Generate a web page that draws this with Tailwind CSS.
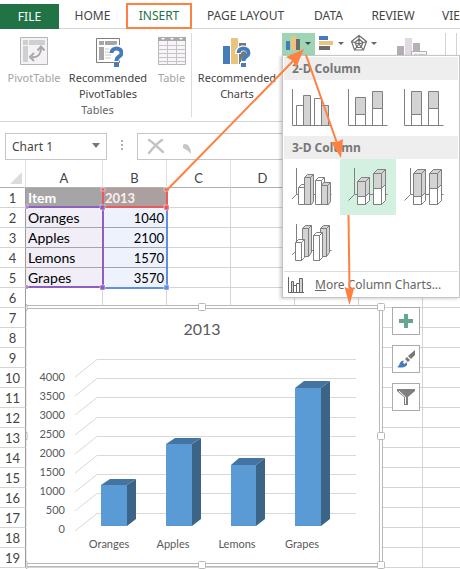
<!DOCTYPE html>
<html lang="en">
<head>
<meta charset="utf-8">
<meta name="viewport" content="width=device-width, initial-scale=1">
<title>Chart 1 - Spreadsheet</title>
<script src="https://cdn.jsdelivr.net/npm/@tailwindcss/browser@4"></script>
</head>
<body class="bg-white">
<div class="relative min-h-screen w-full overflow-hidden font-['Noto_Sans',sans-serif] text-xs text-[#444]">

  <nav class="flex h-[29px] items-end whitespace-nowrap pt-1" aria-label="Ribbon tabs">
    <a href="#" class="flex h-[25px] w-[59px] shrink-0 items-center justify-center bg-[#217346] text-white">FILE</a>
    <a href="#" class="flex h-[25px] w-[67px] shrink-0 items-center justify-center border-b border-[#d4d4d4]">HOME</a>
    <a href="#" class="flex h-[26px] w-[66px] shrink-0 items-center justify-center border-2 border-[#ff8141] text-[#217346]">INSERT</a>
    <a href="#" class="flex h-[25px] w-[107px] shrink-0 items-center justify-center border-b border-[#d4d4d4]">PAGE LAYOUT</a>
    <a href="#" class="flex h-[25px] w-[59px] shrink-0 items-center justify-center border-b border-[#d4d4d4]">DATA</a>
    <a href="#" class="flex h-[25px] w-[70px] shrink-0 items-center justify-center border-b border-[#d4d4d4]">REVIEW</a>
    <a href="#" class="flex h-[25px] min-w-[60px] flex-1 items-center border-b border-[#d4d4d4] pl-[14px]">VIEW</a>
  </nav>

  <section class="flex h-[93px] border-b border-[#d4d4d4] pt-1" aria-label="Insert">
    <div class="flex h-[84px] w-[192px] shrink-0 flex-col justify-between border-r border-[#dcdcdc]">
      <div class="flex text-[11px]">
        <button class="flex w-[68px] flex-col items-center text-[#a3a3a3]">
          <svg class="mt-1 h-[28px] w-[28px]" viewBox="0 0 28 28"><path d="M.5.5h27v27H.5z" fill="#f5f2f7" stroke="#b5b5b5"/><path d="M3 3h5v5H3zM9 3h16v5H9zM3 9h5v16H3z" fill="#cfcfcf"/><path d="M12 20c6 1 9-3 9-9" fill="none" stroke="#a9a9a9" stroke-width="2"/><path d="M17.500 13.500l3.500-4 3.500 4M14 16l-4 4 4 4" fill="none" stroke="#a9a9a9" stroke-width="2"/></svg>
          <span class="mt-[5px] leading-4">PivotTable</span>
        </button>
        <button class="flex w-[80px] flex-col items-center">
          <svg class="mt-1 h-[30px] w-[30px]" viewBox="0 0 30 30"><path d="M3.500 1.500h23v24h-23z" fill="#fff" stroke="#7d7d7d"/><path d="M6 4h5v4H6zM12 4h12v4H12zM6 10h5v13H6z" fill="#a6a6a6"/><path d="M12 12h8M12 15h6M12 18h6M12 21h6" stroke="#c7c7c7"/><path d="M18.500 15c0-6 10-6 10 0 0 4-5 3-5 9" fill="none" stroke="#fff" stroke-width="6"/><path d="M18.500 16c0-6 10-6 10 0 0 4-5 3-5 8" fill="none" stroke="#447dbb" stroke-width="4"/><path d="M21 26h5v4h-5z" fill="#447dbb"/></svg>
          <span class="mt-[3px] leading-4">Recommended<br>PivotTables</span>
        </button>
        <button class="flex w-[43px] flex-col items-center pl-1 text-[#a3a3a3]">
          <svg class="mt-1 h-[28px] w-[28px]" viewBox="0 0 28 28"><path d="M.5.5h27v27H.5z" fill="#f8f4f9" stroke="#b5b5b5"/><path d="M0 0h28v4H0z" fill="#aaa"/><path d="M3 1h4L5 3zM12 1h4l-2 2zM21 1h4l-2 2z" fill="#fff"/><path d="M0 8.500h28M0 12.500h28M0 16.500h28M0 20.500h28M0 24.500h28M9.500 4v24M18.500 4v24" stroke="#c5c5c5"/></svg>
          <span class="mt-[5px] leading-4">Table</span>
        </button>
      </div>
      <span class="pl-1 text-center text-[11px] leading-[14px] text-[#666]">Tables</span>
    </div>

    <div class="flex flex-1 items-start overflow-hidden">
      <button class="flex w-[90px] shrink-0 flex-col items-center text-[11px]">
        <svg class="mt-1 h-[30px] w-[30px]" viewBox="0 0 30 30"><path d="M1 9h7v18H1z" fill="#447dbb"/><path d="M9 1h7v26H9z" fill="#eac47d"/><path d="M17 6h7v21h-7z" fill="#777"/><path d="M16 17c0-8 12-7 12 0 0 4-6 3-6 8" fill="none" stroke="#fff" stroke-width="6"/><path d="M16.500 16c0-6 10-6 10 0 0 4-5 3-5 8" fill="none" stroke="#447dbb" stroke-width="4"/><path d="M18 25h7v5h-7z" fill="#fff"/><path d="M19 26h5v4h-5z" fill="#447dbb"/></svg>
        <span class="mt-[3px] leading-4">Recommended<br>Charts</span>
      </button>
      <button class="h-[23px] w-[33px] shrink-0 bg-[#9fd5b7]" aria-label="Insert column chart">
        <svg class="h-[23px] w-[33px]" viewBox="0 0 33 23"><path d="M4 8h4v9H4z" fill="#447dbb"/><path d="M9 3h5v14H9z" fill="#eac47d"/><path d="M14 6h4v11h-4z" fill="#6c6c6c"/><path d="M23 9h6l-3 3z" fill="#444"/></svg>
      </button>
      <button class="shrink-0" aria-label="Insert bar chart">
        <svg class="h-[23px] w-[33px]" viewBox="0 0 33 23"><path d="M4 3h9v4H4z" fill="#447dbb"/><path d="M4 8h14v4H4z" fill="#eac47d"/><path d="M4 13h11v4H4z" fill="#6c6c6c"/><path d="M23 9h6l-3 3z" fill="#666"/></svg>
      </button>
      <button class="shrink-0" aria-label="Insert radar chart">
        <svg class="h-[23px] w-[33px]" viewBox="0 0 33 23"><path d="M11 2.500l7.500 6-3 8.500h-9l-3-8.500zM11 6l4 3.500-2 5H9l-2-5zM11 2v9M18.500 8.500L11 11M15.500 17L11 11M6.500 17l4.500-6M3.500 8.500L11 11" fill="none" stroke="#6c6c6c" stroke-width="1.200"/><path d="M23 9h6l-3 3z" fill="#666"/></svg>
      </button>
      <button class="shrink-0" aria-label="PivotChart">
        <svg class="ml-4 h-[32px] w-[32px]" viewBox="0 0 32 32"><path d="M0 13h7v16H0z" fill="#b2aeb2"/><path d="M8 5h7v24H8z" fill="#e0d9e1"/><path d="M16 10h7v18h-7z" fill="#b5b2b5"/><path d="M14.500 18.500h15v13h-15z" fill="#f8f5f9" stroke="#b2b2b2"/><path d="M17 21h3v3h-3zM21 21h7v3h-7z" fill="#ccc"/></svg>
      </button>
      <div class="ml-4 h-[84px] w-[12px] shrink-0 border-x border-[#d4d4d4]"></div>
    </div>
  </section>

  <section class="flex h-[38px] items-end gap-[14px] pl-[5px]" aria-label="Formula bar">
    <div class="relative h-[27px] w-[102px] shrink-0 border border-[#c6c6c6]">
      <input aria-label="Name box" value="Chart 1" class="h-full w-[80px] bg-transparent pl-[6px] text-[#444] outline-none">
      <svg class="absolute right-[6px] top-[9px] h-[5px] w-[8px]" viewBox="0 0 8 5"><path d="M0 0h8L4 5z" fill="#777"/></svg>
    </div>
    <svg class="mb-2 h-[12px] w-[2px] shrink-0" viewBox="0 0 2 12"><path d="M0 0h2v2H0zM0 4h2v2H0zM0 8h2v2H0z" fill="#b0b0b0"/></svg>
    <div class="flex h-[27px] flex-1 items-center gap-[18px] border border-r-0 border-[#c6c6c6] pl-[9px]">
      <svg class="h-[17px] w-[18px]" viewBox="0 0 18 17"><path d="M2 2c5 3 9 8 14 12M15 2C10 5 6 10 2 15" fill="none" stroke="#c3c3c3" stroke-width="2.500" stroke-linecap="round"/></svg>
      <svg class="mt-1 h-[11px] w-[8px]" viewBox="0 0 8 11"><path d="M0 2c3-3 8 1 8 9C6 8 2 6 0 5z" fill="#c6c6c6"/></svg>
    </div>
  </section>

  <main class="relative">
    <table class="w-full min-w-[486px] table-fixed border-separate border-spacing-0 font-[Lato,sans-serif] text-[13px] leading-4 [&_td]:h-5 [&_td]:border-b [&_td]:border-r [&_td]:border-[#d4d4d4] [&_td]:p-0 [&_td]:px-[2px] [&_tbody_th]:h-5 [&_tbody_th]:border-b [&_tbody_th]:border-r [&_tbody_th]:border-b-[#d4d4d4] [&_tbody_th]:border-r-[#9c9c9c] [&_tbody_th]:p-0 [&_tbody_th]:font-normal [&_thead_th]:h-[28px] [&_thead_th]:border-b [&_thead_th]:border-r [&_thead_th]:border-b-[#b0b0b0] [&_thead_th]:border-r-[#e2e2e2] [&_thead_th]:p-0 [&_thead_th]:pt-2 [&_thead_th]:font-normal">
      <colgroup><col class="w-[26px]"><col class="w-[77px]"><col class="w-[64px]"><col class="w-[64px]"><col class="w-[64px]"><col class="w-[64px]"><col class="w-[64px]"><col></colgroup>
      <thead><tr><th><svg class="ml-[10px] h-[12px] w-[12px]" viewBox="0 0 12 12"><path d="M12 0v12H0z" fill="#dcdcdc"/></svg></th><th>A</th><th>B</th><th>C</th><th>D</th><th>E</th><th>F</th><th>G</th></tr></thead>
      <tbody>
        <tr><th>1</th><td class="bg-[#a5a5a5] text-sm leading-4 font-bold text-white">Item</td><td class="bg-[#ac9f9f] font-bold text-[#fbeeee]">2013</td><td></td><td></td><td></td><td></td><td></td></tr>
        <tr class="text-black"><th class="text-[#444]">2</th><td class="border-b-[#a5a5a5]! bg-[#f2eef8] text-sm leading-4">Oranges</td><td class="border-b-[#a5a5a5]! bg-[#edf2fc] text-right">1040</td><td></td><td></td><td></td><td></td><td></td></tr>
        <tr class="text-black"><th class="text-[#444]">3</th><td class="border-b-[#a5a5a5]! bg-[#f2eef8] text-sm leading-4">Apples</td><td class="border-b-[#a5a5a5]! bg-[#edf2fc] text-right">2100</td><td></td><td></td><td></td><td></td><td></td></tr>
        <tr class="text-black"><th class="text-[#444]">4</th><td class="border-b-[#a5a5a5]! bg-[#f2eef8] text-sm leading-4">Lemons</td><td class="border-b-[#a5a5a5]! bg-[#edf2fc] text-right">1570</td><td></td><td></td><td></td><td></td><td></td></tr>
        <tr class="text-black"><th class="text-[#444]">5</th><td class="bg-[#f2eef8] text-sm leading-4">Grapes</td><td class="bg-[#edf2fc] text-right">3570</td><td></td><td></td><td></td><td></td><td></td></tr>
        <tr><th>6</th><td></td><td></td><td></td><td></td><td></td><td></td><td></td></tr>
        <tr><th>7</th><td></td><td></td><td></td><td></td><td></td><td></td><td></td></tr>
        <tr><th>8</th><td></td><td></td><td></td><td></td><td></td><td></td><td></td></tr>
        <tr><th>9</th><td></td><td></td><td></td><td></td><td></td><td></td><td></td></tr>
        <tr><th>10</th><td></td><td></td><td></td><td></td><td></td><td></td><td></td></tr>
        <tr><th>11</th><td></td><td></td><td></td><td></td><td></td><td></td><td></td></tr>
        <tr><th>12</th><td></td><td></td><td></td><td></td><td></td><td></td><td></td></tr>
        <tr><th>13</th><td></td><td></td><td></td><td></td><td></td><td></td><td></td></tr>
        <tr><th>14</th><td></td><td></td><td></td><td></td><td></td><td></td><td></td></tr>
        <tr><th>15</th><td></td><td></td><td></td><td></td><td></td><td></td><td></td></tr>
        <tr><th>16</th><td></td><td></td><td></td><td></td><td></td><td></td><td></td></tr>
        <tr><th>17</th><td></td><td></td><td></td><td></td><td></td><td></td><td></td></tr>
        <tr><th>18</th><td></td><td></td><td></td><td></td><td></td><td></td><td></td></tr>
        <tr><th>19</th><td></td><td></td><td></td><td></td><td></td><td></td><td></td></tr>
      </tbody>
    </table>

    <!-- Source range outlines: category names, series name, values -->
    <svg class="absolute left-[24px] top-[26px] h-[106px] w-[150px]" viewBox="24 186 150 106" aria-hidden="true" fill="none">
      <path d="M103 288h64V208" stroke="#5f8fe6" stroke-width="2"/>
      <path d="M103 189v18h64v-18" stroke="#ea5a5a" stroke-width="2"/>
      <path d="M27 207h76v80H27" stroke="#8c5fc0" stroke-width="2"/>
      <path d="M26 205h2v4h-2zM26 285h2v4h-2zM100 205h5v5h-5zM100 285h5v5h-5z" fill="#8c5fc0" stroke="#fff" stroke-width=".5"/>
      <path d="M101 188h4v3h-4zM164 188h5v3h-5zM164 205h5v5h-5z" fill="#ea5a5a" stroke="#fff" stroke-width=".5"/>
      <path d="M164 285h5v5h-5z" fill="#5f8fe6" stroke="#fff" stroke-width=".5"/>
    </svg>

    <svg class="absolute left-[26px] top-[143px] h-[266px] w-[360px] font-[Lato,sans-serif]" viewBox="26 303 360 266" role="img" aria-label="2013 sales by item, 3-D column chart">
      <path d="M26 305h357v262H26z" fill="#fff"/>
      <path d="M26 305.500h356.500v261H26M26 308.500h353.500v255H26" fill="none" stroke="#b8b8b8"/>
      <path d="M26.500 308v256" stroke="#ececec"/>
      <g fill="#fff" stroke="#b8b8b8"><rect x="198.500" y="303.500" width="7" height="7" rx="1"/><rect x="377.500" y="303.500" width="7" height="7" rx="1"/><rect x="377.500" y="432.500" width="7" height="7" rx="1"/><rect x="377.500" y="561.500" width="7" height="7" rx="1"/><rect x="198.500" y="561.500" width="7" height="7" rx="1"/><path d="M26 304.500h1v6h-1M26 432.500h1v7h-1M26 561.500h1v7h-1"/></g>
      <path d="M75 377l22-17.500h259M75 396l22-17.500h259M75 415l22-17.500h259M75 435l22-17.500h259M75 454l22-17.500h259M75 473l22-17.500h259M75 492l22-17.500h259M75 511l22-17.500h259M75 531l22-17.500h259" fill="none" stroke="#d9d9d9"/>
      <g fill="#3b6487"><path d="M127 485l9-6v40l-9 7zM192 444l9-6v81l-9 7zM256 465l9-7v61l-9 7zM321 388l9-7v138l-9 7z"/></g>
      <g fill="#4475a2"><path d="M101 485l9-6h26l-9 6zM166 444l9-6h26l-9 6zM231 465l8-7h26l-9 7zM295 388l9-7h26l-9 7z"/></g>
      <g fill="#5b9bd5"><path d="M101 485h26v41h-26zM166 444h26v82h-26zM231 465h25v61h-25zM295 388h26v138h-26z"/></g>
      <text x="202" y="335" text-anchor="middle" font-size="16" fill="#595959">2013</text>
      <g font-size="11" fill="#595959" text-anchor="end"><text x="65" y="381">4000</text><text x="65" y="400">3500</text><text x="65" y="419">3000</text><text x="65" y="438">2500</text><text x="65" y="457">2000</text><text x="65" y="476">1500</text><text x="65" y="495">1000</text><text x="65" y="514">500</text><text x="65" y="533">0</text></g>
      <g font-size="11" fill="#595959" text-anchor="middle"><text x="109" y="548">Oranges</text><text x="173" y="548">Apples</text><text x="237" y="548">Lemons</text><text x="302" y="548">Grapes</text></g>
    </svg>

    <div class="absolute left-[392px] top-[147px] flex flex-col gap-[10px]">
      <button aria-label="Chart elements" class="flex h-[28px] w-[28px] items-center justify-center border border-[#ababab] bg-white"><svg class="h-[14px] w-[14px]" viewBox="0 0 14 14"><path d="M5 0h4v5h5v4H9v5H5V9H0V5h5z" fill="#66a68e"/></svg></button>
      <button aria-label="Chart styles" class="flex h-[28px] w-[28px] items-center justify-center border border-[#ababab] bg-white"><svg class="h-[18px] w-[18px]" viewBox="0 0 18 18"><path d="M18 0v5l-4 4-3-3zM10 7l3 3-2 2-3-3z" fill="#777"/><path d="M0 17c3-1 2-5 5-6 2-1 6 1 5 4-2 3-7 3-10 2z" fill="#447dbb"/><path d="M6 12c1-2 4-1 3 1l-2 1z" fill="#fff"/></svg></button>
      <button aria-label="Chart filters" class="flex h-[28px] w-[28px] items-center justify-center border border-[#ababab] bg-white"><svg class="h-[18px] w-[18px]" viewBox="0 0 18 18"><path d="M0 1h18v2l-7 6v8H7V9L0 3z" fill="#808080"/><path d="M2 3l6.500 6v7" fill="none" stroke="#fff"/></svg></button>
    </div>
  </main>

  <div role="menu" class="absolute left-[282px] top-[55px] w-[178px] border border-[#c6c6c6] bg-white p-px pb-0 shadow-[-2px_1px_3px_rgba(0,0,0,0.18)]">
    <h3 class="h-[23px] bg-[#eee] pl-2 font-bold leading-[23px] text-[#777]">2-D Column</h3>
    <div class="flex flex-wrap [&_path]:stroke-[#7f7f7f]">
      <button role="menuitem" aria-label="Clustered column"><svg class="h-[56px] w-[56px]" viewBox="0 0 56 56" fill="#fff"><path d="M12.500 45V25.500h7V45M30.500 45V18.500h7V45"/><path d="M19.500 45V15.500h7V45M37.500 45V25.500h7V45" fill="#d3d3d3"/><path d="M8.500 9v36.500h39" fill="none"/></svg></button>
      <button role="menuitem" aria-label="Stacked column"><svg class="h-[56px] w-[56px]" viewBox="0 0 56 56" fill="#fff"><path d="M15.500 34.500h10v11h-10zM32.500 28.500h10v17h-10z"/><path d="M15.500 17.500h10v17h-10zM32.500 11.500h10v17h-10z" fill="#d3d3d3"/><path d="M8.500 9v36.500h39" fill="none"/></svg></button>
      <button role="menuitem" aria-label="100% stacked column"><svg class="h-[56px] w-[56px]" viewBox="0 0 56 56" fill="#fff"><path d="M15.500 34.500h10v11h-10zM32.500 28.500h10v17h-10z"/><path d="M15.500 11.500h10v23h-10zM32.500 11.500h10v17h-10z" fill="#d3d3d3"/><path d="M8.500 9v36.500h39" fill="none"/></svg></button>
    </div>
    <h3 class="h-[23px] bg-[#eee] pl-2 font-bold leading-[23px] text-[#777]">3-D Column</h3>
    <div class="flex flex-wrap [&_path]:stroke-[#7f7f7f]">
      <button role="menuitem" aria-label="3-D clustered column"><svg class="h-[56px] w-[56px]" viewBox="0 0 56 56" fill="#fff"><path d="M12.500 9v26.500L8 40M12.500 35.500h35" fill="none"/><path d="M14.500 28.500l3-3h6v17l-3 3h-6zM14.500 28.500h6v17M20.500 28.500l3-3"/><path d="M20.500 18.500l3-3h6v27l-2 3h-7zM20.500 18.500h6v27M26.500 18.500l3-3" fill="#d3d3d3"/><path d="M31.500 21.500l3-3h6v24l-3 3h-6zM31.500 21.500h6v24M37.500 21.500l3-3"/><path d="M37.500 26.500l2-3h7v19l-2 3h-7zM37.500 26.500h6v19M43.500 26.500l3-3" fill="#d3d3d3"/></svg></button>
      <button role="menuitem" aria-label="3-D stacked column" class="bg-[#d3f0e0]"><svg class="h-[56px] w-[56px]" viewBox="0 0 56 56" fill="#d3d3d3"><path d="M14.500 9v26.500l-6 6M14.500 35.500h33" fill="none"/><path d="M17.500 22.500l4-4h8v23l-4 4h-8zM17.500 22.500h8v23M25.500 22.500l4-4M33.500 14.500l4-4h8v31l-4 4h-8zM33.500 14.500h8v31M41.500 14.500l4-4"/><path d="M17.500 37.500h8v8h-8zM25.500 37.500l4-4v8l-4 4zM33.500 29.500h8v16h-8zM41.500 29.500l4-4v16l-4 4z" fill="#fff"/></svg></button>
      <button role="menuitem" aria-label="3-D 100% stacked column"><svg class="h-[56px] w-[56px]" viewBox="0 0 56 56" fill="#d3d3d3"><path d="M14.500 9v26.500l-6 6M14.500 35.500h33" fill="none"/><path d="M17.500 14.500l4-4h8v31l-4 4h-8zM17.500 14.500h8v31M25.500 14.500l4-4M33.500 14.500l4-4h8v31l-4 4h-8zM33.500 14.500h8v31M41.500 14.500l4-4"/><path d="M17.500 37.500h8v8h-8zM25.500 37.500l4-4v8l-4 4zM33.500 29.500h8v16h-8zM41.500 29.500l4-4v16l-4 4z" fill="#fff"/></svg></button>
      <button role="menuitem" aria-label="3-D column"><svg class="h-[56px] w-[56px]" viewBox="0 0 56 56" fill="#fff"><path d="M12.500 9v26.500L8 40M12.500 35.500h35" fill="none"/><path d="M18.500 13.500l3-3h6v27l-3 4h-6zM18.500 13.500h6v28M24.500 13.500l3-3M36.500 13.500l3-3h6v27l-3 4h-6zM36.500 13.500h6v28M42.500 13.500l3-3" fill="#d3d3d3"/><path d="M11.500 27.500l3-3h6v18l-3 3h-6zM11.500 27.500h6v18M17.500 27.500l3-3M29.500 20.500l3-3h6v25l-3 3h-6zM29.500 20.500h6v25M35.500 20.500l3-3"/></svg></button>
    </div>
    <button role="menuitem" class="flex h-[26px] w-full items-center gap-[10px] border-t border-[#dcdcdc] pl-1 text-[#666]">
      <svg class="h-[16px] w-[17px]" viewBox="0 0 17 16" fill="#d3d3d3" stroke="#666"><path d="M3.500 15V4.500h2V15M11.500 15V1.500h3V15"/><path d="M5.500 15V8.500h3V15M8.500 15V6.500h3V15" fill="#fff"/><path d="M.5 0v15.500H16" fill="none"/></svg>
      <span class="whitespace-nowrap"><u>M</u>ore Column Charts...</span>
    </button>
  </div>

  <!-- Step-by-step callout arrows -->
  <svg class="pointer-events-none absolute left-0 top-0 h-[310px] w-[460px]" viewBox="0 0 460 310" aria-hidden="true" fill="#ff8141">
    <path d="M167 190L295 59M306 55l31 88M348.500 215l1 74" fill="none" stroke="#ff8141" stroke-width="2"/>
    <path d="M304 49l-18 8 7 4 3 7zM341 158l2-19-6 3-6 0zM349.500 305l5-18-5 2-5-2z"/>
  </svg>
</div>
</body>
</html>
